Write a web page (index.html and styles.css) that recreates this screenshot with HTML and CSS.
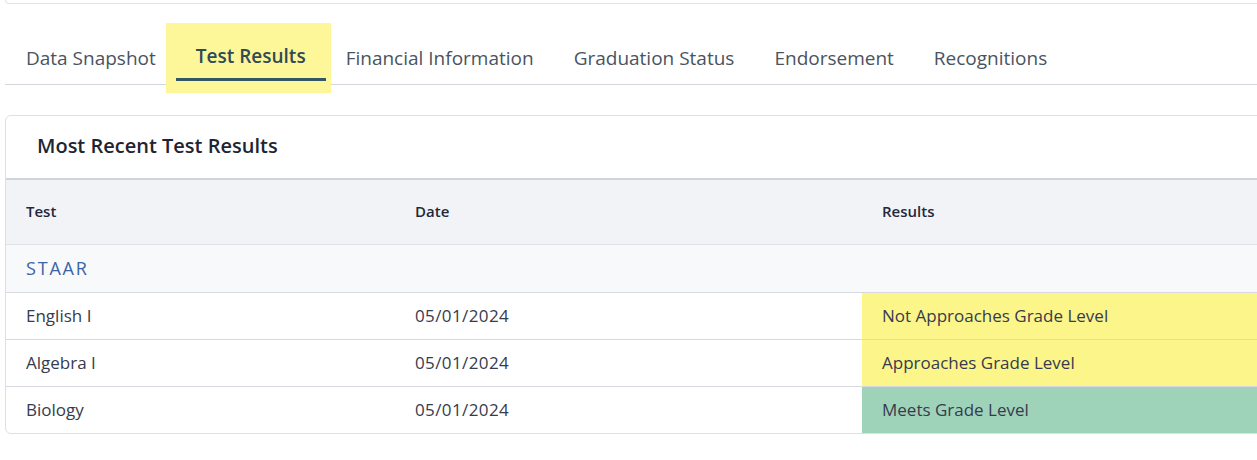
FILE: index.html
```html
<!DOCTYPE html>
<html lang="en">

<head>
    <meta charset="UTF-8">
    <meta name="viewport" content="width=device-width, initial-scale=1.0">
    <title>Test Results</title>
    <link rel="stylesheet" href="styles.css">
</head>

<body>
    <div class="page">
        <!-- bottom edge of the card above -->
        <div class="prev-card"></div>

        <!-- Tabs -->
        <div class="tabs">
            <a class="tab" href="">Data Snapshot</a>
            <a class="tab active" href=""><span>Test Results</span></a>
            <a class="tab" href="">Financial Information</a>
            <a class="tab" href="">Graduation Status</a>
            <a class="tab" href="">Endorsement</a>
            <a class="tab" href="">Recognitions</a>
        </div>

        <!-- Results card -->
        <div class="card">
            <h2 class="card-title">Most Recent Test Results</h2>
            <table class="results">
                <colgroup>
                    <col class="col-test">
                    <col class="col-date">
                    <col>
                </colgroup>
                <thead>
                    <tr>
                        <th>Test</th>
                        <th>Date</th>
                        <th>Results</th>
                    </tr>
                </thead>
                <tbody>
                    <tr class="group">
                        <td colspan="3">STAAR</td>
                    </tr>
                    <tr>
                        <td>English I</td>
                        <td class="date">05/01/2024</td>
                        <td class="approaches">Not Approaches Grade Level</td>
                    </tr>
                    <tr>
                        <td>Algebra I</td>
                        <td class="date">05/01/2024</td>
                        <td class="approaches">Approaches Grade Level</td>
                    </tr>
                    <tr>
                        <td>Biology</td>
                        <td class="date">05/01/2024</td>
                        <td class="meets">Meets Grade Level</td>
                    </tr>
                </tbody>
            </table>
        </div>
    </div>
</body>

</html>
```

FILE: styles.css
```css
/* Reset */
* {
    margin: 0;
    padding: 0;
    box-sizing: border-box;
}

body {
    font-family: "Open Sans", "Noto Sans", sans-serif;
    color: #2e3244;
    background: #fff;
    overflow: hidden;
}

.page {
    width: 1300px;
    padding-left: 5px;
}

/* Card above, only its bottom edge shows */
.prev-card {
    height: 4px;
    border: 1px solid #e1e3e7;
    border-top: none;
    border-radius: 0 0 5px 5px;
}

/* Tabs */
.tabs {
    display: flex;
    margin-top: 26px;
    padding-left: 1px;
    border-bottom: 1px solid #d3d6dd;
}

.tab {
    position: relative;
    padding: 16px 20px 8px;
    margin-bottom: 3px;
    font-size: 19px;
    line-height: 24px;
    color: #4a5361;
    text-decoration: none;
    border-bottom: 3px solid transparent;
}

.tab.active {
    padding-top: 14px;
    padding-bottom: 10px;
    font-weight: 600;
    color: #2f4b55;
}

/* yellow highlight round the active tab */
.tab.active::before {
    content: "";
    position: absolute;
    left: -10px;
    right: -5px;
    top: -7px;
    bottom: -15px;
    background: #fdf79a;
    z-index: 0;
}

.tab.active span {
    position: relative;
    z-index: 1;
}

.tab.active::after {
    content: "";
    position: absolute;
    left: 0;
    right: 0;
    bottom: -3px;
    height: 3px;
    background: #325762;
    z-index: 1;
}

/* Card */
.card {
    margin-top: 30px;
    border: 1px solid #dcdfe5;
    border-radius: 6px;
    overflow: hidden;
}

.card-title {
    padding: 18px 31px 20px;
    font-size: 20px;
    line-height: 24px;
    font-weight: 600;
    color: #1f2433;
}

/* Table */
.results {
    width: 100%;
    border-collapse: collapse;
    table-layout: fixed;
}

.col-test {
    width: 389px;
}

.col-date {
    width: 467px;
}

.results th {
    text-align: left;
    font-size: 15px;
    line-height: 20px;
    font-weight: 600;
    color: #23283a;
    background: #f2f3f7;
    padding: 21px 20px 23px;
    border-top: 2px solid #d0d4dc;
    border-bottom: 1px solid #dfe2e7;
}

.results td {
    font-size: 17px;
    line-height: 24px;
    padding: 11px 20px;
    color: #363b4e;
    border-bottom: 1px solid #d6d9df;
}

.results td.date {
    letter-spacing: 0.4px;
}

.results tr:last-child td {
    border-bottom: none;
}

.results .group td {
    font-size: 18px;
    letter-spacing: 1.8px;
    padding: 11px 20px 12px;
    color: #3b65a6;
    background: #f8f9fb;
}

.approaches {
    background: #fcf58a;
}

.meets {
    background: #9fd3b9;
}
```
